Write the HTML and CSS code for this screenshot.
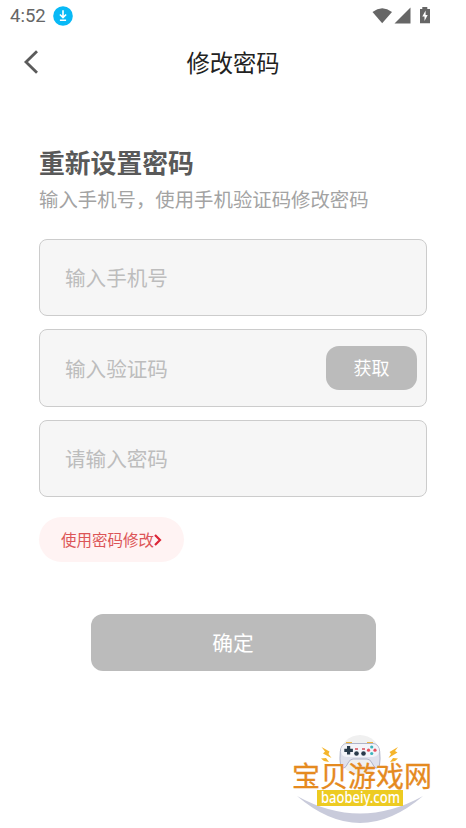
FILE: index.html
```html
<!DOCTYPE html>
<html lang="zh-CN">
<head>
<meta charset="utf-8">
<title>修改密码</title>
<link rel="stylesheet" href="styles.css">
</head>
<body>
<div class="statusbar">
  <span class="clock">4:52</span>
  <svg class="download" width="20" height="20" viewBox="0 0 20 20"><circle cx="10" cy="10" r="9.8" fill="#08b9f6"/><path d="M10 4.3v7M6.9 8.5l3.1 3.1 3.1-3.1M6.9 14.2h6.2" fill="none" stroke="#fff" stroke-width="1.6"/></svg>
  <svg class="signals" width="60" height="20" viewBox="0 0 60 20" fill="#666"><path d="M1.5 6Q11.2 -1.4 21 6L11.2 17.3Z"/><path d="M23.5 17.5L39.5 1.5V17.5Z"/><path d="M49 3h2.3V1h5v2H59v14.3H49z" /><path d="M54.6 4.6l-3.3 6h2.2v4.3l3.2-6h-2.1z" fill="#fff"/></svg>
</div>
<header class="navbar">
  <svg class="back" width="16" height="26" viewBox="0 0 16 26"><path d="M14 2.3L3 13 14 23.7" fill="none" stroke="#5b5b5b" stroke-width="2.8"/></svg>
  <h1 class="title">修改密码</h1>
</header>
<main class="content">
  <h2 class="heading">重新设置密码</h2>
  <p class="hint">输入手机号，使用手机验证码修改密码</p>
  <div class="fields">
    <div class="field">输入手机号</div>
    <div class="field">输入验证码<button class="fetch">获取</button></div>
    <div class="field">请输入密码</div>
  </div>
  <a class="switch"><span>使用密码修改</span><svg width="8" height="14" viewBox="0 0 8 14"><path d="M1 2l5 5-5 5" fill="none" stroke="#dc2638" stroke-width="2.2"/></svg></a>
  <button class="submit">确定</button>
</main>
<svg class="watermark" width="160" height="103" viewBox="0 0 160 103">
  <circle cx="80" cy="30" r="20" fill="#f0f0f0"/>
  <path d="M17 71Q80 106 143 71Q80 125 17 71Z" fill="#c9cbdb"/>
  <path d="M66 17.7h6M87 17.7h6" stroke="#efb63e" stroke-width="1.6"/>
  <path d="M67 18.5h26q6 .5 6.700 8 .8 8-.2 13.500-1 3.500-3.500 3-2-.5-4-5-2-4-5-4H73q-3 0-5 4-2 4.500-4 5-2.500.5-3.500-3-1-5.500-.2-13.500.7-7.500 6.700-8z" fill="#dfe1ec" stroke="#a9aec3" stroke-width=".9"/>
  <path d="M67 19h26q6 1 6 6.500T93 32H67q-6-.5-6-6.500t6-6.500z" fill="#f3f4f9"/>
  <g fill="#293b4b"><path d="M67 21h3.200v2.700h2.700v3.200h-2.700v2.700H67v-2.700h-2.700v-3.200H67z"/><circle cx="76.500" cy="28.500" r="2.300"/><circle cx="83.500" cy="28.500" r="2.300"/></g>
  <path d="M75 24h3M82 24h3" stroke="#d84b58" stroke-width="1.500"/>
  <circle cx="91.700" cy="22" r="1.600" fill="#3db5bb"/><circle cx="91.700" cy="28.500" r="1.600" fill="#3db5bb"/><circle cx="88.500" cy="25.200" r="1.600" fill="#e64e5c"/><circle cx="95" cy="25.200" r="1.600" fill="#e64e5c"/>
  <g fill="#f5b52c"><path d="M41.500 22l8 4.500-1 2.500 3 4-8.500-4.500 2-2z"/><path d="M118 22l-8.500 5 1.500 2-2.500 4 9-5.500-2.500-1.500z"/><path d="M41 33.500l5-.5 3 4-5-1z"/><path d="M118 33.500l-5-.5-3 4 5-1z"/></g>
  <text class="brand" x="12" y="61.500">宝贝游戏网</text>
  <rect x="37" y="65" width="86" height="16" fill="#edcb22"/>
  <text class="domain" x="41" y="77.500" textLength="79" lengthAdjust="spacingAndGlyphs">baobeiy.com</text>
</svg>
</body>
</html>
```
FILE: styles.css
```css
* { box-sizing: border-box; }
body {
  margin: 0;
  height: 828px;
  overflow: hidden;
  position: relative;
  background: #fff;
  font-family: "Noto Sans CJK SC", sans-serif;
}
h1, h2, p { margin: 0; }
button { border: 0; padding: 0 0 2px; font-family: inherit; color: #fff; background: #bbb; }
.statusbar { height: 32px; padding: 0 35px 1px 10px; display: flex; align-items: center; }
.clock { width: 43px; font: 18.5px/20px Roboto, sans-serif; color: #666; }
.signals { margin-left: auto; }
.navbar { height: 60px; padding-left: 23px; display: grid; align-items: center; }
.back, .title { grid-area: 1 / 1; }
.title { margin-left: -23px; text-align: center; font-size: 23.3px; line-height: 34px; font-weight: 400; color: #222; }
.content { padding: 51px 39px 0; display: flex; flex-direction: column; align-items: flex-start; }
.heading { font-size: 25.8px; line-height: 38px; font-weight: 700; color: #595959; }
.hint { margin-top: 3px; font-size: 19.4px; line-height: 30px; font-weight: 400; color: #a3a3a3; white-space: nowrap; }
.fields { margin-top: 24.5px; width: 388px; display: grid; gap: 13px; }
.field {
  height: 77.6px;
  padding: 0 9px 0 25px;
  display: flex;
  align-items: center;
  justify-content: space-between;
  border: 1.5px solid #ccc;
  border-radius: 8px;
  background: #f6f6f6;
  color: #bdbdbd;
  font-size: 20.6px;
}
.fetch { width: 91px; height: 44px; border-radius: 13px; font-size: 18px; }
.switch {
  margin-top: 20px;
  width: 145px;
  height: 45px;
  padding-left: 22px;
  display: flex;
  align-items: center;
  border-radius: 23px;
  background: #fff3f3;
  color: #dc5557;
  font-size: 15.5px;
  white-space: nowrap;
}
.switch span { padding-bottom: 2px; }
.submit { align-self: center; margin-top: 52px; width: 285px; height: 57px; border-radius: 12px; font-size: 20.7px; }
.watermark { position: absolute; left: 280px; top: 725px; }
.brand { font-size: 28px; font-weight: 400; fill: #e58a1f; stroke: #e58a1f; stroke-width: .3px; }
.domain { font: 500 16px "Noto Sans", sans-serif; fill: #fff; }
```
